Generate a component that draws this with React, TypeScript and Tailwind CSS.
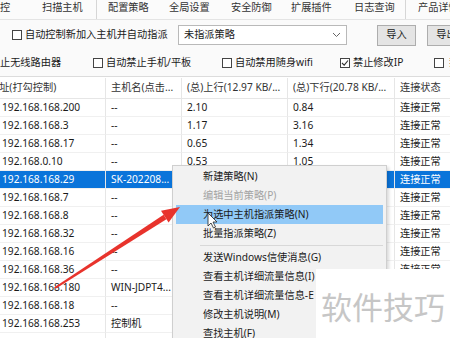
const font = "font-['Noto_Sans','Noto_Sans_CJK_SC',sans-serif]";

type Row = { ip: string; host: string; up: string; down: string; selected?: boolean };

const rows: Row[] = [
  { ip: '192.168.168.200', host: '--', up: '2.10', down: '0.84' },
  { ip: '192.168.168.3', host: '--', up: '1.17', down: '3.16' },
  { ip: '192.168.168.17', host: '--', up: '0.65', down: '1.34' },
  { ip: '192.168.0.10', host: '--', up: '0.53', down: '1.05' },
  { ip: '192.168.168.29', host: 'SK-202208...', up: '0.42', down: '0.77', selected: true },
  { ip: '192.168.168.7', host: '--', up: '0.31', down: '0.52' },
  { ip: '192.168.168.8', host: '--', up: '0.28', down: '0.40' },
  { ip: '192.168.168.32', host: '--', up: '0.20', down: '0.36' },
  { ip: '192.168.168.16', host: '--', up: '0.15', down: '0.22' },
  { ip: '192.168.168.36', host: '--', up: '0.11', down: '0.19' },
  { ip: '192.168.168.180', host: 'WIN-JDPT4...', up: '0.08', down: '0.12' },
  { ip: '192.168.168.18', host: '--', up: '0.05', down: '0.09' },
  { ip: '192.168.168.253', host: '控制机', up: '0.02', down: '0.04' },
];

function Box({ checked }: { checked?: boolean }) {
  return (
    <span className="w-[10px] h-[10px] border border-[#444] bg-white flex items-center justify-center shrink-0">
      {checked && (
        <svg width="8" height="8" viewBox="0 0 8 8">
          <path d="M1 4 L3.2 6.2 L7 1.5" fill="none" stroke="#333" strokeWidth="1.1" />
        </svg>
      )}
    </span>
  );
}

const menu: { label: string; disabled?: boolean; active?: boolean; sep?: boolean }[] = [
  { label: '新建策略(N)' },
  { label: '编辑当前策略(P)', disabled: true },
  { label: '为选中主机指派策略(N)', active: true },
  { label: '批量指派策略(Z)' },
  { label: '', sep: true },
  { label: '发送Windows信使消息(G)' },
  { label: '查看主机详细流量信息(I)' },
  { label: '查看主机详细流量信息-E' },
  { label: '修改主机说明(M)' },
  { label: '查找主机(F)' },
];

export default function App() {
  const cell = 'border-r border-[#e6e6e6] overflow-hidden whitespace-nowrap px-[5px] flex items-center';
  return (
    <div className={`relative w-[450px] h-[338px] overflow-hidden bg-white text-[10.2px] text-[#1a1a1a] ${font}`}>
      {/* tabs */}
      <div className="h-[20px] flex items-center border-b border-[#e4e4e4] bg-[#fbfbfb] text-[#333]">
        <div className="w-[42px] shrink-0 h-full flex items-center pb-[3px]">控</div>
        <div className="w-[54px] shrink-0 h-full flex items-center pb-[3px]">扫描主机</div>
        <div className="h-full shrink-0 flex border-l border-[#d6d6d6] pl-[11px]">
          <div className="w-[61px] flex items-center pb-[3px]">配置策略</div>
          <div className="w-[62px] flex items-center pb-[3px]">全局设置</div>
          <div className="w-[60px] flex items-center pb-[3px]">安全防御</div>
          <div className="w-[63px] flex items-center pb-[3px]">扩展插件</div>
          <div className="w-[51px] flex items-center pb-[3px]">日志查询</div>
        </div>
        <div className="h-full shrink-0 flex items-center border-l border-[#d6d6d6] pl-[12px] pb-[3px] whitespace-nowrap">产品详情</div>
      </div>

      {/* options */}
      <div className="bg-[#fafafa]">
        <div className="h-[30px] flex items-center">
          <div className="w-[178px] shrink-0 pl-[12px] flex items-center gap-[3px] whitespace-nowrap">
            <Box />
            <span>自动控制新加入主机并自动指派</span>
          </div>
          <div className="w-[169px] shrink-0 h-[20px] border border-[#b9b9b9] bg-white flex items-center justify-between px-[5px]">
            <span>未指派策略</span>
            <svg width="9" height="6" viewBox="0 0 9 6">
              <path d="M1 1 L4.5 4.5 L8 1" fill="none" stroke="#666" strokeWidth="1" />
            </svg>
          </div>
          <div className="ml-[30px] w-[39px] h-[21px] border border-[#adadad] bg-[#e4e4e4] flex items-center justify-center shrink-0">导入</div>
          <div className="ml-[11px] w-[39px] h-[21px] border border-[#adadad] bg-[#e4e4e4] flex items-center justify-center shrink-0">导出</div>
        </div>
        <div className="h-[27px] flex items-center whitespace-nowrap border-b border-[#dcdcdc]">
          <div className="w-[93px] shrink-0">止无线路由器</div>
          <div className="w-[129px] shrink-0 flex items-center gap-[3px]">
            <Box />
            <span>自动禁止手机/平板</span>
          </div>
          <div className="w-[118px] shrink-0 flex items-center gap-[3px]">
            <Box />
            <span>自动禁用随身wifi</span>
          </div>
          <div className="w-[94px] shrink-0 flex items-center gap-[3px]">
            <Box checked />
            <span>禁止修改IP</span>
          </div>
          <div className="shrink-0 flex items-center gap-[5px]">
            <Box />
            <span>禁止</span>
          </div>
        </div>
      </div>

      {/* table */}
      <div className="grid grid-cols-[106px_76px_106px_107px_1fr] mt-[1px]">
        <div className={`${cell} h-[21px] text-[#333] border-b border-[#e6e6e6] pl-0`}>
          <span className="ml-[-11px]">地址(打勾控制)</span>
        </div>
        <div className={`${cell} h-[21px] text-[#333] border-b border-[#e6e6e6]`}>主机名(点击...</div>
        <div className={`${cell} h-[21px] text-[#333] border-b border-[#e6e6e6]`}>(总)上行(12.97 KB/...</div>
        <div className={`${cell} h-[21px] text-[#333] border-b border-[#e6e6e6]`}>(总)下行(20.78 KB/...</div>
        <div className={`${cell} h-[21px] text-[#333] border-b border-[#e6e6e6] border-r-0`}>连接状态</div>
        {rows.map((r) => {
          const sel = r.selected ? 'bg-[#0a74da] text-white' : '';
          const rc = `${cell} h-[18px] border-b border-b-[#f0f0f0] ${sel}`;
          return [
            <div key={r.ip + 'a'} className={`${rc} pl-[2px]`}>{r.ip}</div>,
            <div key={r.ip + 'b'} className={rc}>{r.host}</div>,
            <div key={r.ip + 'c'} className={rc}>{r.up}</div>,
            <div key={r.ip + 'd'} className={rc}>{r.down}</div>,
            <div key={r.ip + 'e'} className={`${rc} border-r-0`}>连接正常</div>,
          ];
        })}
        <div className={`${cell} h-[18px]`} />
        <div className={`${cell} h-[18px]`} />
        <div className={`${cell} h-[18px]`} />
        <div className={`${cell} h-[18px]`} />
        <div className={`${cell} h-[18px] border-r-0`} />
      </div>

      {/* context menu */}
      <div className="absolute left-[172px] top-[165px] w-[215px] h-[190px] bg-[#f2f2f2] border border-[#cfcfcf] shadow-[2px_2px_3px_rgba(0,0,0,0.15)] pt-[1px] px-[3px]">
        {menu.map((m, i) =>
          m.sep ? (
            <div key={i} className="h-[5px] flex items-center pl-[24px]">
              <div className="h-px w-full bg-[#d8d8d8]" />
            </div>
          ) : (
            <div
              key={i}
              className={`h-[19px] flex items-center pl-[27px] whitespace-nowrap ${m.active ? 'bg-[#91c9f7]' : ''} ${m.disabled ? 'text-[#a3a3a3]' : 'text-[#1a1a1a]'}`}
            >
              {m.label}
            </div>
          )
        )}
      </div>

      {/* watermark */}
      <div className="absolute left-[316px] top-[269px] right-0 bottom-0 bg-white pl-[5px] pt-[21px]">
        <div className="text-[31px] leading-[31px] text-[#c6c6c6] whitespace-nowrap font-['Noto_Sans_CJK_SC',sans-serif]">软件技巧</div>
      </div>

      {/* arrow + cursor */}
      <svg className="absolute inset-0 pointer-events-none" width="450" height="338" viewBox="0 0 450 338">
        <polygon points="54,287.5 56,288.5 166.4,219.2 163.6,214.8" fill="#e8332c" />
        <polygon points="180,207 168.6,222.6 161,210.8" fill="#e8332c" />
        <path
          d="M208 213 L208 226 L211 223 L213.5 228 L215.5 227 L213 222 L217 222 Z"
          fill="#fff"
          stroke="#222"
          strokeWidth="0.8"
        />
      </svg>
    </div>
  );
}
